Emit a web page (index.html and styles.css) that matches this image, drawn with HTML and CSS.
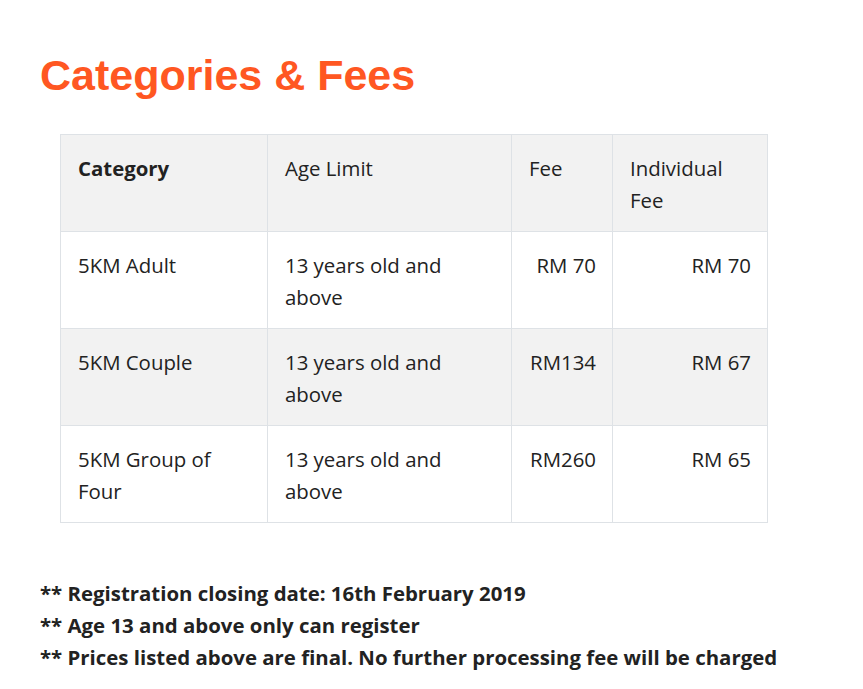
FILE: index.html
```html
<!DOCTYPE html>
<html>
<head>
<meta charset="utf-8">
<link rel="stylesheet" href="styles.css">
</head>
<body>
<div class="page">
  <h2 class="title">Categories &amp; Fees</h2>
  <table class="fees">
    <colgroup>
      <col class="c1"><col class="c2"><col class="c3"><col class="c4">
    </colgroup>
    <tr class="shade">
      <th>Category</th>
      <td>Age Limit</td>
      <td>Fee</td>
      <td>Individual Fee</td>
    </tr>
    <tr>
      <td>5KM Adult</td>
      <td>13 years old and above</td>
      <td class="num">RM 70</td>
      <td class="num">RM 70</td>
    </tr>
    <tr class="shade">
      <td>5KM Couple</td>
      <td>13 years old and above</td>
      <td class="num">RM134</td>
      <td class="num">RM 67</td>
    </tr>
    <tr>
      <td>5KM Group of Four</td>
      <td>13 years old and above</td>
      <td class="num">RM260</td>
      <td class="num">RM 65</td>
    </tr>
  </table>
  <div class="notes">
    <p>** Registration closing date: 16th February 2019</p>
    <p>** Age 13 and above only can register</p>
    <p>** Prices listed above are final. No further processing fee will be charged</p>
  </div>
</div>
</body>
</html>
```
FILE: styles.css
```css
html, body {
  margin: 0;
  padding: 0;
  background: #ffffff;
}
.page {
  padding: 49px 40px 0 40px;
  font-family: "Open Sans", "Noto Sans", sans-serif;
  font-size: 20.4px;
  line-height: 32px;
  color: #222222;
}
.title {
  margin: 0 0 33px 0;
  font-family: "Liberation Sans", Arial, sans-serif;
  font-weight: bold;
  font-size: 43px;
  line-height: 52px;
  color: #ff5722;
}
.fees {
  margin-left: 20px;
  width: 707px;
  border-collapse: collapse;
  table-layout: fixed;
}
.c1 { width: 207px; }
.c2 { width: 244px; }
.c3 { width: 101px; }
.c4 { width: 155px; }
.fees th, .fees td {
  border: 1px solid #dee2e6;
  padding: 17px 16px 15px 17px;
  text-align: left;
  vertical-align: top;
  font-weight: normal;
}
.fees th {
  font-weight: bold;
}
.fees td.num {
  text-align: right;
}
.fees tr.shade {
  background: #f2f2f2;
}
.notes {
  margin-top: 54px;
  font-weight: bold;
}
.notes p {
  margin: 0;
}
```
